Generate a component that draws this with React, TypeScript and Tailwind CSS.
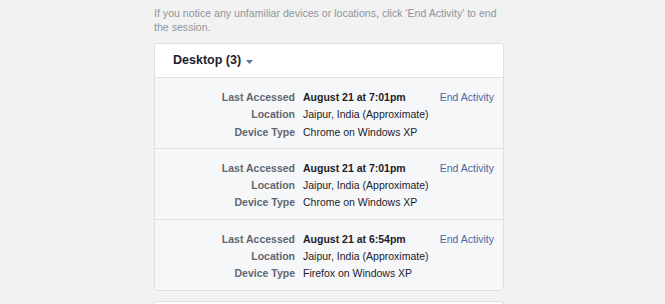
import React from "react";

const sessions = [
  { time: "August 21 at 7:01pm", location: "Jaipur, India (Approximate)", device: "Chrome on Windows XP" },
  { time: "August 21 at 7:01pm", location: "Jaipur, India (Approximate)", device: "Chrome on Windows XP" },
  { time: "August 21 at 6:54pm", location: "Jaipur, India (Approximate)", device: "Firefox on Windows XP" },
];

const App: React.FC = () => {
  return (
    <div className="h-[304px] w-full overflow-hidden bg-[#f2f2f2] font-['Liberation_Sans',Arial,sans-serif]">
      <div className="ml-[154px] w-[350px] pt-[6px]">
        {/* Intro */}
        <p className="text-[10.6px] leading-[14px] text-[#90949c]">
          If you notice any unfamiliar devices or locations, click 'End Activity' to end the session.
        </p>

        {/* Desktop card */}
        <div className="mt-[9px] rounded-[3px] border border-[#dddfe2] bg-white">
          <div className="flex h-[34px] items-center border-b border-[#dddfe2] pl-[18px]">
            <span className="text-[12.5px] font-bold text-[#1d2129]">Desktop (3)</span>
            <svg className="ml-[5px] mt-[2px]" width="7" height="4" viewBox="0 0 7 4">
              <path d="M0 0h7L3.5 4z" fill="#5b74a8" />
            </svg>
          </div>
          {sessions.map((s, i) => (
            <div
              key={i}
              className={`flex bg-[#f6f7f9] pb-[7px] pt-[11px] text-[10.5px] leading-[17.3px] ${
                i < sessions.length - 1 ? "border-b border-[#dddfe2]" : "rounded-b-[3px]"
              }`}
            >
              <div className="w-[148px] pr-[8px] text-right font-bold text-[#616770]">
                <div>Last Accessed</div>
                <div>Location</div>
                <div>Device Type</div>
              </div>
              <div className="flex-1 text-[#1d2129]">
                <div className="font-bold">{s.time}</div>
                <div>{s.location}</div>
                <div>{s.device}</div>
              </div>
              <div className="pr-[9px]">
                <a className="text-[#4b67a1]">End Activity</a>
              </div>
            </div>
          ))}
        </div>

        {/* Next card (cut off) */}
        <div className="mt-[10px] h-[20px] rounded-t-[3px] border border-b-0 border-[#dddfe2] bg-white" />
      </div>
    </div>
  );
};

export default App;
